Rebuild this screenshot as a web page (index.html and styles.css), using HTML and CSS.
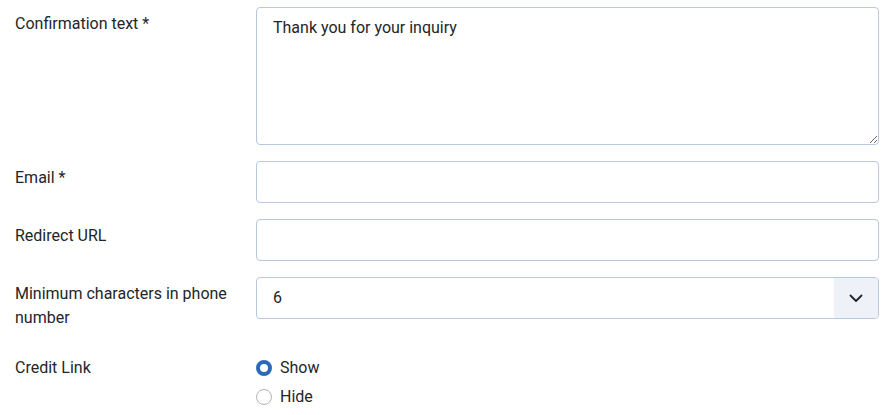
FILE: index.html
```html
<!DOCTYPE html>
<html>
<head>
<meta charset="utf-8">
<link rel="stylesheet" href="styles.css">
</head>
<body>
<form class="form">
  <div class="row">
    <label class="label">Confirmation text *</label>
    <div class="control"><textarea class="textarea">Thank you for your inquiry</textarea></div>
  </div>
  <div class="row">
    <label class="label">Email *</label>
    <div class="control"><input class="input" type="text"></div>
  </div>
  <div class="row">
    <label class="label">Redirect URL</label>
    <div class="control"><input class="input" type="text"></div>
  </div>
  <div class="row">
    <label class="label">Minimum characters in phone number</label>
    <div class="control">
      <div class="select">
        <span class="select-value">6</span>
        <span class="select-btn"><svg width="16" height="16" viewBox="0 0 16 16"><path d="M2.5 5.5 L8 11 L13.5 5.5" fill="none" stroke="#22262a" stroke-width="1.8" stroke-linecap="round" stroke-linejoin="round"/></svg></span>
      </div>
    </div>
  </div>
  <div class="row row-radio">
    <label class="label">Credit Link</label>
    <div class="control radios">
      <label class="radio"><span class="dot dot-on"></span>Show</label>
      <label class="radio"><span class="dot"></span>Hide</label>
    </div>
  </div>
</form>
</body>
</html>
```
FILE: styles.css
```css
html, body { margin: 0; padding: 0; background: #fff; }
body {
  font-family: Roboto, "Liberation Sans", sans-serif;
  font-size: 16px;
  color: #22262a;
}
.form {
  padding: 7px 11px 0 15px;
  display: flex;
  flex-direction: column;
  gap: 16px;
}
.row { display: flex; }
.label {
  width: 241px;
  flex: none;
  padding-top: 5px;
  padding-right: 20px;
  box-sizing: border-box;
  line-height: 24px;
  font-size: 16px;
  color: #22262a;
}
.control { flex: 1; min-width: 0; }
.textarea, .input {
  display: block;
  width: 100%;
  box-sizing: border-box;
  border: 1px solid #b8c7dc;
  border-radius: 4px;
  font-family: Roboto, "Liberation Sans", sans-serif;
  font-size: 16px;
  color: #22262a;
  padding: 8px 16px;
  line-height: 24px;
  background: #fff;
  margin: 0;
}
.textarea { height: 138px; resize: vertical; }
.input { height: 42px; }
.select {
  display: flex;
  height: 42px;
  box-sizing: border-box;
  border: 1px solid #b8c7dc;
  border-radius: 4px;
  overflow: hidden;
}
.select-value { flex: 1; padding-left: 16px; line-height: 40px; }
.select-btn {
  width: 44px;
  background: #eef2f8;
  display: flex;
  align-items: center;
  justify-content: center;
}
.row-radio { margin-top: 11px; }
.row-radio .label { padding-top: 0; line-height: 22px; }
.radios { display: flex; flex-direction: column; gap: 7px; }
.radio { display: flex; align-items: center; line-height: 22px; gap: 8px; }
.dot {
  width: 16px; height: 16px;
  box-sizing: border-box;
  border-radius: 50%;
  border: 1px solid #b0b5bb;
  background: #fff;
}
.dot-on { border: 4.5px solid #2a69b8; background: #fff; }
```
